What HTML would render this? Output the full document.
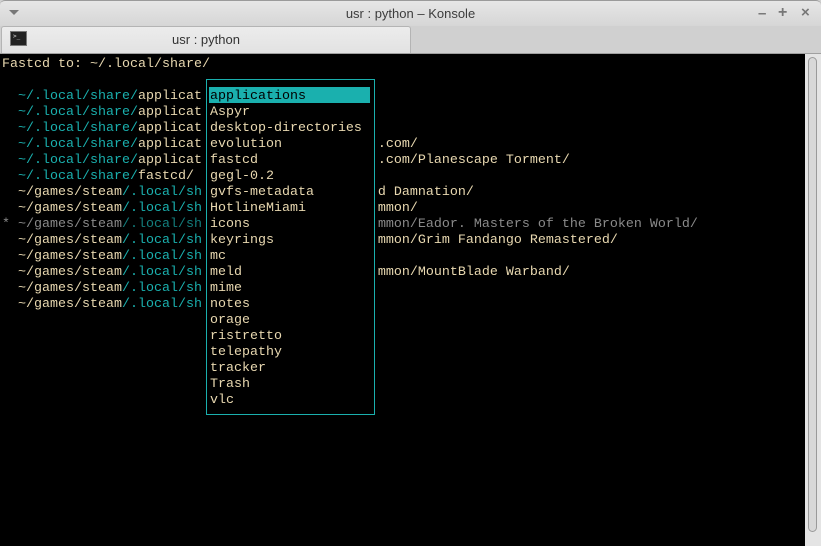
<!DOCTYPE html><html><head><style>
body{margin:0;width:821px;height:546px;overflow:hidden;background:#d0d0d0;font-family:"Liberation Sans",sans-serif}
#title{position:absolute;left:0;top:0;width:821px;height:26px;background:linear-gradient(#e6e6e6,#d6d6d6);border-top:1px solid #9a9a9a;border-radius:5px 5px 0 0;box-sizing:border-box}
#title .t{position:absolute;left:0;right:0;top:5px;text-align:center;font-size:13px;color:#3c3c3c}
#tabbar{position:absolute;left:0;top:26px;width:821px;height:28px;background:#d0d0d0;border-bottom:1px solid #a0a0a0;box-sizing:border-box}
#tab{position:absolute;left:1px;top:0;width:410px;height:27px;background:linear-gradient(#ececec,#e2e2e2);border:1px solid #b4b4b4;border-bottom:none;border-radius:3px 3px 0 0;box-sizing:border-box}
#tab .t{position:absolute;left:0;right:0;top:5px;text-align:center;font-size:13px;color:#333}
#term{position:absolute;left:0;top:54px;width:805px;height:492px;background:#000}
#sb{position:absolute;left:805px;top:54px;width:16px;height:492px;background:#e4e4e4}
#thumb{position:absolute;left:3px;top:3px;width:9px;height:475px;background:#d8d8d8;border:1px solid #9a9a9a;border-radius:5px;box-sizing:border-box}
.l{position:absolute;left:2px;margin:0;margin-top:3px;font-family:"Liberation Mono",monospace;font-size:13.33px;line-height:16px;height:16px;white-space:pre;color:#e8d8b0}
.c{color:#1ab0ae}.g{color:#8a8a8a}.gc{color:#137f7e}
#pop{position:absolute;left:206px;top:79px;width:169px;height:336px;border:1px solid #1ab0ae;box-sizing:border-box;background:#000}
#hl{position:absolute;left:209px;top:87px;width:161px;height:16px;background:#1ab0ae}
</style></head><body>
<div id="title"><span style="position:absolute;left:9px;top:9px;width:0;height:0;border-left:5px solid transparent;border-right:5px solid transparent;border-top:5px solid #777"></span><div class="t">usr : python – Konsole</div>
<span style="position:absolute;left:758px;top:4px;font-size:15px;color:#777;font-weight:bold">–</span><span style="position:absolute;left:778px;top:3px;font-size:16px;color:#777;font-weight:bold">+</span><span style="position:absolute;left:801px;top:3px;font-size:15px;color:#777;font-weight:bold">×</span></div>
<div id="tabbar"><div id="tab"><span style="position:absolute;left:8px;top:4px;width:15px;height:13px;background:#222;border:1px solid #777"><span style="position:absolute;left:2px;top:1px;color:#ddd;font-size:6px;font-family:monospace">&gt;_</span></span><div class="t">usr : python</div></div></div>
<div id="term"></div>
<div id="sb"><div id="thumb"></div></div>
<div id="pop"></div><div id="hl"></div>
<div class="l" style="top:54px">Fastcd to: ~/.local/share/</div>
<div class="l" style="top:86px">  <span class="c">~/.local/share/</span>applicat <span style="color:#000">applications</span></div>
<div class="l" style="top:102px">  <span class="c">~/.local/share/</span>applicat Aspyr</div>
<div class="l" style="top:118px">  <span class="c">~/.local/share/</span>applicat desktop-directories</div>
<div class="l" style="top:134px">  <span class="c">~/.local/share/</span>applicat evolution            .com/</div>
<div class="l" style="top:150px">  <span class="c">~/.local/share/</span>applicat fastcd               .com/Planescape Torment/</div>
<div class="l" style="top:166px">  <span class="c">~/.local/share/</span>fastcd/  gegl-0.2</div>
<div class="l" style="top:182px">  ~/games/steam<span class="c">/.local/sh</span> gvfs-metadata        d Damnation/</div>
<div class="l" style="top:198px">  ~/games/steam<span class="c">/.local/sh</span> HotlineMiami         mmon/</div>
<div class="l" style="top:214px"><span class="g">* ~/games/steam</span><span class="gc">/.local/sh</span> icons                <span class="g">mmon/Eador. Masters of the Broken World/</span></div>
<div class="l" style="top:230px">  ~/games/steam<span class="c">/.local/sh</span> keyrings             mmon/Grim Fandango Remastered/</div>
<div class="l" style="top:246px">  ~/games/steam<span class="c">/.local/sh</span> mc</div>
<div class="l" style="top:262px">  ~/games/steam<span class="c">/.local/sh</span> meld                 mmon/MountBlade Warband/</div>
<div class="l" style="top:278px">  ~/games/steam<span class="c">/.local/sh</span> mime</div>
<div class="l" style="top:294px">  ~/games/steam<span class="c">/.local/sh</span> notes</div>
<div class="l" style="top:310px">                          orage</div>
<div class="l" style="top:326px">                          ristretto</div>
<div class="l" style="top:342px">                          telepathy</div>
<div class="l" style="top:358px">                          tracker</div>
<div class="l" style="top:374px">                          Trash</div>
<div class="l" style="top:390px">                          vlc</div>
</body></html>
